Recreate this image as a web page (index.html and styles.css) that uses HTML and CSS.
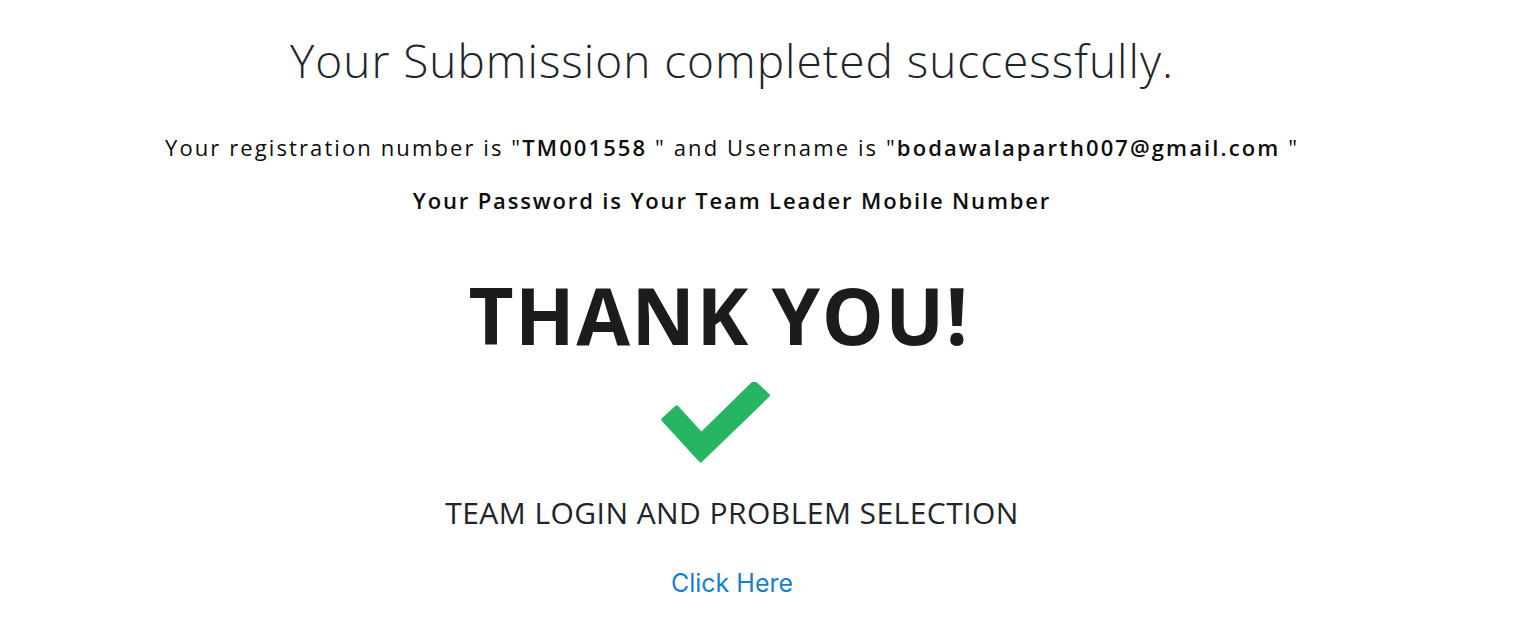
FILE: index.html
```html
<!DOCTYPE html>
<html lang="en">
<head>
<meta charset="utf-8">
<title>Submission completed</title>
<link rel="stylesheet" href="styles.css">
</head>
<body>
<main class="page">
  <h1 class="title">Your Submission completed successfully.</h1>
  <p class="info">Your registration number is "<b>TM001558 </b>" and Username is "<b>bodawalaparth007@gmail.com </b>"</p>
  <p class="password">Your Password is Your Team Leader Mobile Number</p>
  <div class="thanks">
    <div class="thanks-text">THANK YOU!</div>
    <svg class="check" width="112" height="84" viewBox="0 0 112 84" aria-hidden="true">
      <polygon points="2.35,37.57 15.65,25.43 40.3,52.4 93.14,0.64 106.86,13.36 39.7,78.4" fill="#27b463" stroke="#27b463" stroke-width="4" stroke-linejoin="round"/>
    </svg>
  </div>
  <h2 class="team">TEAM LOGIN AND PROBLEM SELECTION</h2>
  <a class="link" href="#">Click Here</a>
</main>
</body>
</html>
```
FILE: styles.css
```css
html, body {
  margin: 0;
  padding: 0;
  background: #ffffff;
}
body {
  font-family: "Open Sans", "Liberation Sans", sans-serif;
  color: #212529;
}
.page {
  width: 1464px;
  display: flex;
  flex-direction: column;
  align-items: center;
  text-align: center;
}
.title {
  margin: 32px 0 0;
  font-size: 46px;
  font-weight: 300;
  line-height: 56px;
  letter-spacing: 1px;
  color: #212529;
}
.info {
  margin: 44px 0 0;
  font-size: 22px;
  line-height: 30px;
  letter-spacing: 2.1px;
  color: #0d0d0d;
}
.info b {
  font-weight: 600;
}
.password {
  margin: 23px 0 0;
  font-size: 22px;
  line-height: 30px;
  font-weight: 600;
  letter-spacing: 1.85px;
  color: #0d0d0d;
}
.thanks {
  margin-top: 65px;
  padding-right: 26px;
  display: flex;
  flex-direction: column;
  align-items: center;
}
.thanks-text {
  font-family: "Open Sans", "Liberation Sans", sans-serif;
  font-weight: 700;
  font-size: 78px;
  line-height: 70px;
  letter-spacing: 1.5px;
  color: #1c1c1c;
}
.check {
  margin-top: 32px;
  margin-right: 3px;
  display: block;
}
.team {
  margin: 27px 0 0;
  font-size: 30px;
  font-weight: 400;
  line-height: 40px;
  letter-spacing: 0.45px;
  color: #212529;
}
.link {
  margin-top: 35px;
  font-family: "Inter", "Liberation Sans", sans-serif;
  font-size: 25px;
  line-height: 30px;
  color: #1a7fc9;
  text-decoration: none;
}
```
